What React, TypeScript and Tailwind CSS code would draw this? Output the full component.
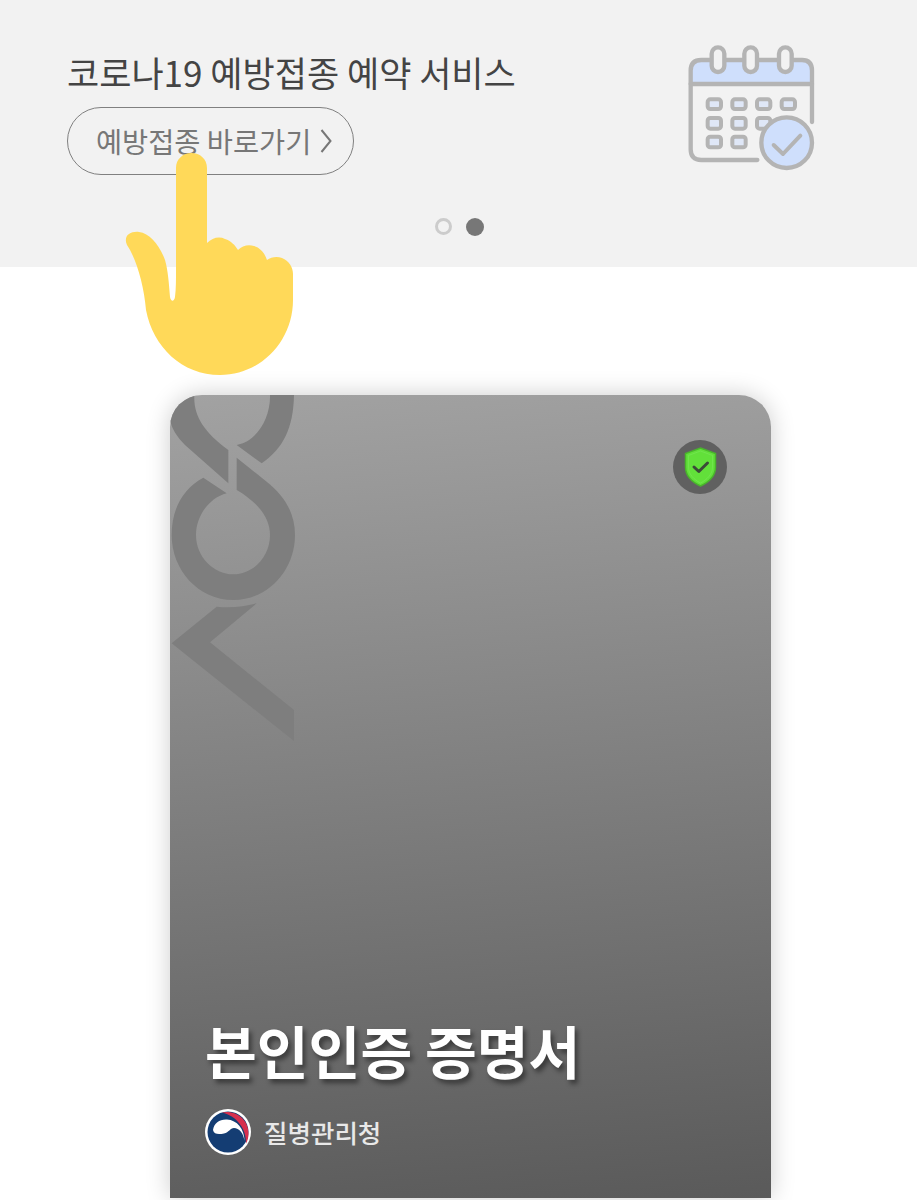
import React from "react";

const krFont = "font-['Noto_Sans_CJK_KR','Noto_Sans',sans-serif]";

const CalendarIcon: React.FC = () => (
  <svg width="180" height="170" viewBox="0 0 540 510" fill="none" stroke="#b4b4b4" strokeWidth="13" strokeLinecap="round" strokeLinejoin="round" className="shrink-0">
    <path d="M92 192V152Q92 120 124 120H426Q456 120 456 152V192Z" fill="#cfdffc" />
    <path d="M92 192V388Q92 420 124 420H292" />
    <path d="M456 192V306" />
    <rect x="155" y="82" width="38" height="74" rx="19" fill="#f2f2f2" />
    <rect x="253" y="82" width="38" height="74" rx="19" fill="#f2f2f2" />
    <rect x="357" y="82" width="38" height="74" rx="19" fill="#f2f2f2" />
    <g fill="#dfe7f7" strokeWidth="12">
      <rect x="143" y="238" width="40" height="29" rx="8" />
      <rect x="217" y="238" width="40" height="29" rx="8" />
      <rect x="291" y="238" width="40" height="29" rx="8" />
      <rect x="365" y="238" width="40" height="29" rx="8" />
      <rect x="143" y="294" width="40" height="32" rx="8" />
      <rect x="217" y="294" width="40" height="32" rx="8" />
      <rect x="291" y="294" width="40" height="32" rx="8" />
      <rect x="143" y="350" width="40" height="32" rx="8" />
      <rect x="217" y="350" width="40" height="32" rx="8" />
    </g>
    <circle cx="380" cy="368" r="76" fill="#cfdffc" />
    <path d="M341 375L369 402L421 347" strokeWidth="12" />
  </svg>
);

const HandPointer: React.FC = () => (
  <svg width="180" height="240" viewBox="0 0 180 240" className="absolute left-[120px] top-[145px]">
    <path
      fill="#ffd959"
      transform="translate(-120 -145)"
      d="M176 168C176 159 183 153 191.5 153C200 153 207 159 207 168V243C212 238 219 236 225 239C231 241 235 245 238 250C242 246 248 244 254 246C261 248 265 254 267 260C271 257 277 256 282 258C289 261 293 267 293 274V300C293 341 261 375 220 375C182 375 153 347 146 310C144 285 136 258 127 245C123 236 130 231 139 232C150 233 160 246 165 260C168 270 169 284 170 297C171 302 174 302 175 297C176 289 176 279 176 270Z"
    />
  </svg>
);

const CardMark: React.FC = () => (
  <svg width="130" height="350" viewBox="30 30 390 1050" className="absolute left-0 top-0 h-[350px] w-[130px]" fill="#7e7e7e">
    <path d="M20 30H103C100 90 130 140 205 195V295L75 180C50 155 35 130 30 105Z" />
    <path d="M330 30C332 100 290 170 230 180L305 235C370 190 400 130 402 30Z" />
    <path d="M130 278C70 310 35 370 35 450C35 555 115 645 220 645C325 645 405 555 405 450C405 380 370 330 320 290L230 218V315C290 350 330 395 330 450C330 515 280 568 220 568C160 568 108 515 108 450C108 390 150 338 200 325Z" />
    <path d="M35 775L170 665C210 670 255 665 290 655L150 772L402 975V1068Z" />
  </svg>
);

const ShieldBadge: React.FC = () => (
  <div className="absolute left-[503px] top-[45px] flex h-[54px] w-[54px] items-center justify-center rounded-full bg-[#606060]">
    <svg width="33" height="40" viewBox="0 0 33 40">
      <path d="M16.5 1L31.5 6.5V20C31.5 29 25 35 16.5 39C8 35 1.5 29 1.5 20V6.5Z" fill="#62e03a" stroke="#49b52c" strokeWidth="1.5" />
      <path d="M16.5 4L28.5 8.5V20C28.5 27.5 23 32.5 16.5 36C10 32.5 4.5 27.5 4.5 20V8.5Z" fill="#62e03a" stroke="#7fe860" strokeWidth="0.5" />
      <path d="M10 20L14.8 24.5L23.5 16" fill="none" stroke="#3b4a38" strokeWidth="3" strokeLinecap="round" strokeLinejoin="round" />
    </svg>
  </div>
);

const Taegeuk: React.FC = () => (
  <svg width="46" height="46" viewBox="0 0 46 46" className="shrink-0">
    <circle cx="23" cy="23" r="23" fill="#ffffff" />
    <circle cx="23" cy="23" r="20.5" fill="#143d73" />
    <path d="M17 3.5C30 0.5 44 10 43.5 25C43.4 29 42.5 32 41 34.5C41.5 20 32 7 17 3.5Z" fill="#d62f4e" />
    <path d="M8 21C9 14 15 10 22 10.5C32 11 39.5 20 39.5 32C38.5 24 34 19 29 19C25 19 24 23.5 19 24.5C13.5 25.5 9 25.5 8 21Z" fill="#ffffff" />
  </svg>
);

const App: React.FC = () => {
  return (
    <div className={`relative h-[1200px] w-[917px] overflow-hidden bg-white ${krFont}`}>
      <section className="flex h-[267px] flex-col bg-[#f2f2f2]">
        <div className="flex justify-between pl-[67px] pr-[77px] pt-[20px]">
          <div className="pt-[28px]">
            <h1 className="text-[35px] font-normal leading-[48px] text-[#444444]">코로나19 예방접종 예약 서비스</h1>
            <button className="mt-[11px] flex h-[68px] w-[287px] items-center rounded-full border border-[#808080] pl-[28px] text-[28.4px] text-[#777777]">
              <span>예방접종 바로가기</span>
              <svg width="12" height="26" viewBox="0 0 12 26" className="ml-[9px]" fill="none" stroke="#777777" strokeWidth="2">
                <path d="M1.5 2L10.5 13L1.5 24" />
              </svg>
            </button>
          </div>
          <CalendarIcon />
        </div>
        <div className="mt-[28px] flex justify-center gap-[14px] pl-[2px]">
          <span className="h-[17px] w-[17px] rounded-full border-[3px] border-[#cccccc]" />
          <span className="h-[18px] w-[18px] rounded-full bg-[#777777]" />
        </div>
      </section>

      <section className="ml-[170px] mt-[128px] flex h-[803px] w-[601px] flex-col justify-end">
        <div className="relative flex h-full flex-col justify-end overflow-hidden rounded-t-[32px] bg-[linear-gradient(175deg,#a2a2a2,#5a5a5a)] px-[35px] pb-[43px] shadow-[0_0_24px_rgba(0,0,0,0.2)]">
          <CardMark />
          <ShieldBadge />
          <h2 className="text-[56.3px] font-bold leading-[72px] text-white [text-shadow:3px_4px_5px_rgba(0,0,0,0.45)]">본인인증 증명서</h2>
          <div className="mt-[23px] flex items-center gap-[13px]">
            <Taegeuk />
            <span className="text-[25.5px] font-medium text-[#e8e8e8]">질병관리청</span>
          </div>
        </div>
      </section>

      <HandPointer />
    </div>
  );
};

export default App;
